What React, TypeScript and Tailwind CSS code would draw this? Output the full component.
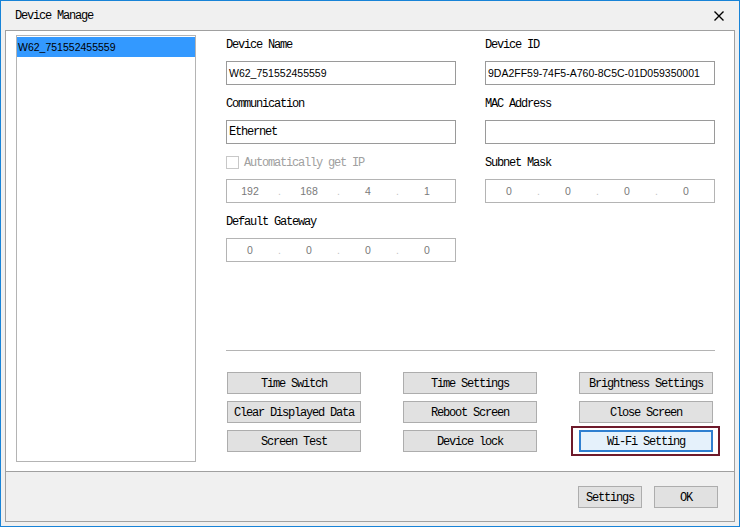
import React from "react";

const mono = "[font-family:'Liberation_Mono',monospace] text-[12px] tracking-[-1.2px] leading-none";
const sans = "[font-family:'Liberation_Sans',Arial,sans-serif] text-[10.5px] leading-none";

function Label({ children }: { children: React.ReactNode }) {
  return <div className={`h-[16px] pt-[1px] flex items-center text-black ${mono}`}>{children}</div>;
}

function TextBox({ children, monoText }: { children?: React.ReactNode; monoText?: boolean }) {
  return (
    <div
      className={`h-[24px] border border-[#9a9a9a] bg-white flex items-center pl-[2px] text-black ${
        monoText ? mono : sans
      }`}
    >
      {children}
    </div>
  );
}

function IpBox({ parts }: { parts: string[] }) {
  return (
    <div className={`h-[24px] border border-[#b4b4b4] bg-white flex items-center pl-[3px] ${sans}`}>
      {parts.map((p, i) => (
        <React.Fragment key={i}>
          <div className="w-[40px] text-center text-[#7a7a7a]">{p}</div>
          {i < 3 && <div className="w-[19px] text-center text-[#c4c4c4]">.</div>}
        </React.Fragment>
      ))}
    </div>
  );
}

function Btn({ children, w = "w-[134px]" }: { children: React.ReactNode; w?: string }) {
  return (
    <div
      className={`${w} h-[22px] border border-[#adadad] bg-[#e1e1e1] flex items-center justify-center pt-[2px] text-black ${mono}`}
    >
      {children}
    </div>
  );
}

export default function App() {
  return (
    <div className="w-[740px] h-[527px] border border-[#1883d7] bg-[#f0f0f0] flex flex-col overflow-hidden">
      {/* Title bar */}
      <div className="h-[29px] flex items-center justify-between pl-[14px] pr-[15px] bg-[#f0f0f0]">
        <span className={`pt-[1px] text-black ${mono}`}>Device Manage</span>
        <svg width="10" height="10" viewBox="0 0 10 10" className="mt-[1px]">
          <path d="M0.5 0.5 L9.5 9.5 M9.5 0.5 L0.5 9.5" stroke="#000" strokeWidth="1.4" />
        </svg>
      </div>

      {/* Inner panel */}
      <div className="mx-[4px] h-[492px] border border-[#a0a0a0] flex flex-col">
        {/* White area */}
        <div className="h-[440px] bg-white flex pl-[10px] pt-[4px]">
          {/* List box */}
          <div className="w-[180px] h-[427px] border border-[#b4b4b4] bg-white pt-[1px]">
            <div className={`h-[20px] bg-[#3399ff] flex items-center pl-[1px] text-black ${sans}`}>
              W62_751552455559
            </div>
          </div>

          {/* Right area */}
          <div className="ml-[30px] w-[489px] pt-[1px] flex flex-col">
            <div className="grid grid-cols-[230px_230px] gap-x-[29px] gap-y-[10px]">
              <div>
                <Label>Device Name</Label>
                <div className="mt-[9px]">
                  <TextBox>W62_751552455559</TextBox>
                </div>
              </div>
              <div>
                <Label>Device ID</Label>
                <div className="mt-[9px]">
                  <TextBox>9DA2FF59-74F5-A760-8C5C-01D059350001</TextBox>
                </div>
              </div>

              <div>
                <Label>Communication</Label>
                <div className="mt-[9px]">
                  <TextBox monoText>Ethernet</TextBox>
                </div>
              </div>
              <div>
                <Label>MAC Address</Label>
                <div className="mt-[9px]">
                  <TextBox />
                </div>
              </div>

              <div>
                <div className="h-[16px] flex items-center">
                  <div className="w-[13px] h-[13px] border border-[#c8c8c8] bg-white" />
                  <span className={`ml-[5px] pt-[1px] text-[#a0a0a0] ${mono}`}>Automatically get IP</span>
                </div>
                <div className="mt-[9px]">
                  <IpBox parts={["192", "168", "4", "1"]} />
                </div>
              </div>
              <div>
                <Label>Subnet Mask</Label>
                <div className="mt-[9px]">
                  <IpBox parts={["0", "0", "0", "0"]} />
                </div>
              </div>

              <div>
                <Label>Default Gateway</Label>
                <div className="mt-[9px]">
                  <IpBox parts={["0", "0", "0", "0"]} />
                </div>
              </div>
              <div />
            </div>

            <div className="mt-[88px] h-px bg-[#b4b4b4]" />

            <div className="mt-[21px] pl-[1px] grid grid-cols-[134px_134px_134px] gap-x-[42px] gap-y-[7px]">
              <Btn>Time Switch</Btn>
              <Btn>Time Settings</Btn>
              <Btn>Brightness Settings</Btn>
              <Btn>Clear Displayed Data</Btn>
              <Btn>Reboot Screen</Btn>
              <Btn>Close Screen</Btn>
              <Btn>Screen Test</Btn>
              <Btn>Device lock</Btn>
              <div className="relative">
                <span className="absolute -left-[8px] -right-[7px] -top-[4px] -bottom-[4px] border-2 border-[#6e1a2b]" />
                <div
                  className={`relative w-[134px] h-[22px] border-2 border-[#2f7fd0] bg-[#e5f1fb] flex items-center justify-center pt-[1px] text-black ${mono}`}
                >
                  Wi-Fi Setting
                </div>
              </div>
            </div>
          </div>
        </div>

        {/* Bottom area */}
        <div className="flex-1 border-t border-[#a0a0a0] bg-[#f0f0f0] flex justify-end items-start pt-[14px] pr-[16px] gap-[12px]">
          <Btn w="w-[64px]">Settings</Btn>
          <Btn w="w-[64px]">OK</Btn>
        </div>
      </div>
    </div>
  );
}
